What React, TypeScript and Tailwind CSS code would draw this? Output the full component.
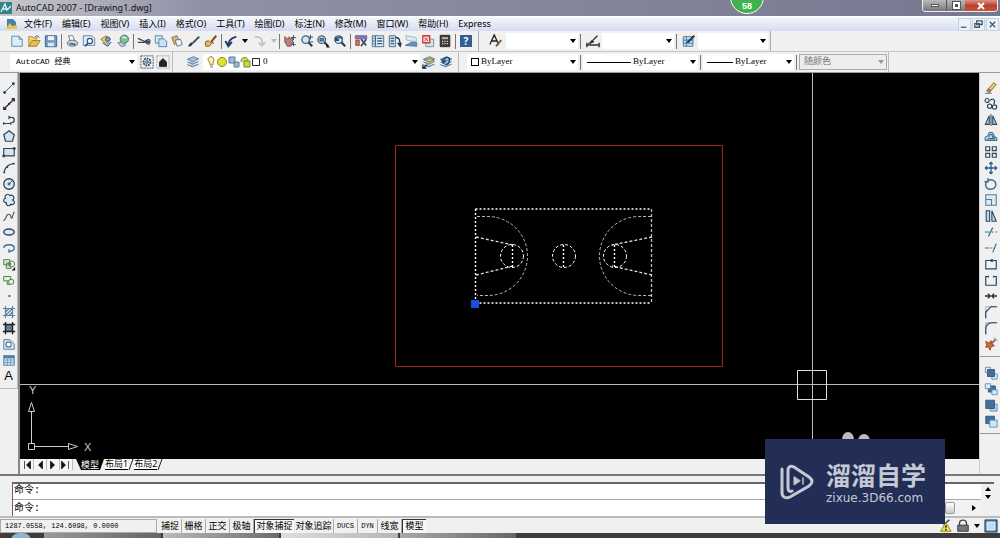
import type { ReactNode } from "react";

type Tool = { name: string; art: ReactNode };

const LENS = <><circle cx="6.5" cy="6.5" r="4.3" fill="#d5e6f2" stroke="#3b6184" strokeWidth="1.5" /><path d="M9.5 9.5l4.5 4.5" stroke="#263f57" strokeWidth="2.4" /></>;
const SHEETS = <path d="M1.5 5l7-3 6 2.5-7 3zM1.5 8l6 2.5 7-3M1.5 11l6 2.5 7-3" fill="#a8c6e2" stroke="#4a7196" />;

const fileTools: Tool[] = [
  { name: "新建", art: <path d="M2 2.5h8.500l3.500 3.500v8H2zM10.500 2.500v3.500H14" fill="#d9eefa" stroke="#4f86a8" /> },
  { name: "打开", art: <><path d="M2 14V3h4l1 1.500h5L8 9z" fill="#f2d774" stroke="#a8892c" /><path d="M2 14l4-6.500h9L11 14z" fill="#e9c14b" stroke="#94772a" /><path d="M9 3.500c2-2 4-1.500 5 .5" stroke="#2d4b6b" /></> },
  { name: "保存", art: <><path d="M1.500 2h13v12.500h-13z" fill="#739dc6" stroke="#355f8b" /><path d="M4.500 2.500h7V7h-7z" fill="#eef5fa" stroke="none" /><path d="M4.500 10h7v4h-7z" fill="#dbe7f2" stroke="none" /></> },
];

const plotTools: Tool[] = [
  { name: "打印", art: <><path d="M4 2h5l2 6H6z" fill="#fff" stroke="#66727d" /><ellipse cx="8.500" cy="10.500" rx="6" ry="3.500" fill="#c6cfd8" stroke="#5d6b78" /><path d="M5 11l7 1" stroke="#3a5066" strokeWidth="1.500" /></> },
  { name: "打印预览", art: <><path d="M1.500 2h10l3 3v8h-13z" fill="#dcecf8" stroke="#557fa5" /><circle cx="9" cy="8" r="3" fill="#fff" stroke="#2e5274" strokeWidth="1.300" /><path d="M7 10.500L3.500 14" stroke="#2e5274" strokeWidth="2" /></> },
  { name: "发布", art: <><path d="M2 6l6-4 5 4-5 5z" fill="#f2d15a" stroke="#8e7426" /><path d="M4 10l6 4 4-5" fill="#9bb7cf" /><circle cx="10" cy="6" r="2.500" fill="#7da4c8" /></> },
  { name: "三维 DWF", art: <><circle cx="9.500" cy="6" r="4.800" fill="#82bd97" stroke="#3b785a" /><path d="M7 4c2-1 3 1 5 0" stroke="#e4f5e9" strokeWidth="1.500" /><path d="M2 10l5-1 4 4-5 1.500z" fill="#b7c8d6" stroke="#64798c" /></> },
];

const editTools: Tool[] = [
  { name: "剪切", art: <path d="M1 5l8 3.500M1 9.500h9M10 8.500c1.500-3 5-2.500 5-.500s-3.500 2-5 .500c1 4 5 3.500 4.500 1.500s-3-2-4.500-1.500" stroke="#3a444e" strokeWidth="1.300" /> },
  { name: "复制", art: <><path d="M1.500 2h8v8.500h-8z" fill="#d8ebf8" stroke="#4e7ba1" /><path d="M5.500 5.500h6l3 3v6h-9z" fill="#c9e2f3" stroke="#4e7ba1" /></> },
  { name: "粘贴", art: <><path d="M2 4l6-2 3 7-6 3z" fill="#d4bb7e" stroke="#79683e" /><path d="M6 7l6-1 2 6-6 2z" fill="#eef4f8" stroke="#5c6e7f" /></> },
  { name: "特性匹配", art: <><path d="M2 14c1-4 3-4 5-4L5 13z" fill="#283848" stroke="#283848" /><path d="M7 10l7-7" stroke="#40566b" strokeWidth="2.400" /></> },
  { name: "块编辑器", art: <><path d="M1.500 9L5 7.500 8.500 11 6 14H2z" fill="#e2c14d" stroke="#705a20" /><path d="M8 9l6-7" stroke="#814f2a" strokeWidth="2.400" /><path d="M8 8l3 3" stroke="#b63a27" strokeWidth="1.500" /></> },
];

const viewTools: Tool[] = [
  { name: "实时平移", art: <><path d="M2 3l4 3 1-3 2 3 2-2v6l-2 4H5L2 9z" fill="#b98078" stroke="#795552" /><path d="M12 1v6M9 4h6M12 9v5M9.500 12h5" stroke="#294d70" /></> },
  { name: "实时缩放", art: <>{LENS}<path d="M12 1v5M10 3.500h5M11 9h4" stroke="#2c4058" /></> },
  { name: "窗口缩放", art: <>{LENS}<path d="M4.500 5h4v3h-4z" fill="#6c9bc1" /><path d="M12 15.500h4l-4-4z" fill="#111" stroke="none" /></> },
  { name: "缩放上一个", art: <>{LENS}<path d="M4 7c0-3 4-4 7-2M3 3v4h4" stroke="#1d4d78" strokeWidth="1.800" /></> },
];

const paletteTools: Tool[] = [
  { name: "特性", art: <><path d="M1.500 2h13v3.500h-13z" fill="#8a76c4" stroke="#6b5a9e" /><path d="M2 7h4v6H2z" fill="#e26f58" stroke="#91483c" /><path d="M8 6l6 7M14 6l-6 8" stroke="#31485d" strokeWidth="1.800" /></> },
  { name: "设计中心", art: <><path d="M1.500 2h13v12.500h-13z" fill="#e2eef7" stroke="#3f658a" /><path d="M5 2v12M7 5h6M7 8h6M7 11h6M2.500 5h1M2.500 8h1M2.500 11h1" stroke="#3f658a" strokeWidth="1.500" /></> },
  { name: "工具选项板", art: <><path d="M1.500 2h7v12.500h-7z" fill="#cddfee" stroke="#3f658a" /><path d="M3 5h4M3 8h4M3 11h4" stroke="#3f658a" strokeWidth="1.500" /><path d="M9 4c4 0 5 3 4.500 9M11 10l3 4 1-4" stroke="#1e3448" strokeWidth="1.500" /></> },
  { name: "图纸集", art: <><path d="M2 2l12 2v5L3 7z" fill="#dceaf2" stroke="#9db1c1" /><path d="M1.500 13l8-4 5 1v4z" fill="#6594b8" stroke="#487093" /></> },
  { name: "标记集", art: <><path d="M5.500 6h9v8.500h-9z" fill="#d5dee6" stroke="#7b8b9a" /><path d="M2 2h8v8H2z" fill="#f6d7d6" stroke="#cc3a38" strokeWidth="1.500" /><path d="M4 4l4 4M8 4L4 8" stroke="#c43735" /></> },
  { name: "快速计算器", art: <><path d="M2.500 1.500h11v13h-11z" fill="#3d3536" stroke="#2d2829" /><path d="M4.500 3.500h7v2.500h-7z" fill="#a9bd94" stroke="none" /><path d="M4.500 8.500h7M4.500 11h7" stroke="#e3d6d1" strokeWidth="1.500" strokeDasharray="1.500 1.200" /></> },
];

const drawTools: Tool[] = [
  { name: "直线", art: <><path d="M3 13L13 3" /><path d="M2 12h2v2H2zM12 2h2v2h-2z" fill="#2b4560" /></> },
  { name: "构造线", art: <path d="M2 14L14 2M2 11v3h3M11 2h3v3M7 7l2 2" strokeWidth="1.500" stroke="#222f3c" /> },
  { name: "多段线", art: <path d="M1 12h9M10 10.500v3M2 10.500v3M8 5h3c4 0 4 6 0 6M8 3v4" strokeWidth="1.400" /> },
  { name: "正多边形", art: <path d="M8 2l6 4.500L12 14H4L2 6.500z" fill="#d5e5f0" strokeWidth="1.400" /> },
  { name: "矩形", art: <><path d="M2 4h12v8.500H2z" fill="#d5e5f0" strokeWidth="1.300" /><path d="M1 11.500h2v2H1zM13 3h2v2h-2z" fill="#1b2d3d" /></> },
  { name: "圆弧", art: <><path d="M2.500 13C3 8 7 3.500 13 3" strokeWidth="1.400" /><path d="M1.500 12h2v2h-2zM12.500 2h2v2h-2zM5 6h2v2H5z" fill="#2b4560" stroke="none" /></> },
  { name: "圆", art: <><circle cx="8" cy="8" r="6" fill="#dceaf3" strokeWidth="1.500" /><path d="M8 8l3.500-3.500M7 7h2v2H7z" /></> },
  { name: "修订云线", art: <path d="M4 6c-2-4 3-6 5-3 4-2 6 3 3 5 4 2 2 6-2 5-2 3-6 1-5-2-4 0-4-4-1-5z" fill="#dceaf3" strokeWidth="1.300" /> },
  { name: "样条曲线", art: <path d="M1.500 13c4 0 2-7 6-7s2 6 4 4l2.500-7" strokeWidth="1.300" stroke="#4a5662" /> },
  { name: "椭圆", art: <ellipse cx="8" cy="8" rx="6" ry="3.500" fill="#dceaf3" strokeWidth="1.600" /> },
  { name: "椭圆弧", art: <path d="M2 8c0-5 12-5 12 0 0 3-3 4-6 3.500M8 9.500v4" strokeWidth="1.500" stroke="#406c93" /> },
  { name: "插入块", art: <><path d="M2 3h7v6H2zM5 7h5v6H5z" fill="#d7ecd0" stroke="#3f7a3d" /><circle cx="11" cy="8" r="3.500" stroke="#54764f" /><path d="M11 15.500h4v-4z" fill="#111" stroke="none" /></> },
  { name: "创建块", art: <><path d="M2 4h8v5H2z" fill="#e5f0df" stroke="#39733c" /><circle cx="10.500" cy="10" r="3" fill="#e5f0df" stroke="#39733c" /><path d="M6 9v4h3" stroke="#39733c" /></> },
  { name: "点", art: <path d="M7.500 7h2v2h-2z" fill="#2b4560" stroke="none" /> },
  { name: "图案填充", art: <path d="M4 1v14M12 1v14M1 4h14M1 12h14M4 8l4-4M4 12l8-8M8 12l4-4" stroke="#567fa4" strokeWidth="1.300" /> },
  { name: "渐变色", art: <><path d="M4 4h8v8H4z" fill="#6b7c8b" /><path d="M4 1v14M12 1v14M1 4h14M1 12h14" stroke="#17222d" strokeWidth="1.600" /></> },
  { name: "面域", art: <><path d="M2 3h7l5 5v6H2z" fill="#d7e8f5" stroke="#4a78a0" /><circle cx="7.500" cy="8.500" r="3" fill="#fff" stroke="#4a78a0" strokeWidth="1.300" /></> },
  { name: "表格", art: <><path d="M2 3h12v11H2z" fill="#d4e6f5" stroke="#4c79a4" /><path d="M2 4.500h12" stroke="#4c79a4" strokeWidth="3" /><path d="M6 3v11M10 3v11M2 8h12M2 11h12" stroke="#6e96bb" /></> },
];

const modifyTools: Tool[] = [
  { name: "删除", art: <><path d="M5 9l6-7 3 2-6 7z" fill="#eac95d" stroke="#806b39" /><path d="M3 11l2-2 3 2-2 2.500z" fill="#d58475" stroke="#725047" /><path d="M1 14h8" stroke="#666" /></> },
  { name: "复制对象", art: <><circle cx="3.500" cy="4" r="2.300" strokeWidth="1.300" /><path d="M7 4c3-4 7 0 4 4" strokeWidth="1.300" /><circle cx="6.500" cy="10.500" r="2.500" strokeWidth="1.300" /><circle cx="12" cy="11.500" r="2.500" strokeWidth="1.300" /></> },
  { name: "镜像", art: <path d="M6 3v10H1.500zM10 3v10h4.500zM8 1.500v13" fill="#a7c8de" strokeWidth="1.200" /> },
  { name: "偏移", art: <path d="M1.500 13h13c1-3-1-4-3-4 0-7-7-7-7-1-3 0-4 3-3 5zM4 11h8c0-1-2-1-2-1 0-5-4-5-4-1" fill="#bed9e8" stroke="#416d8f" strokeWidth="1.200" /> },
  { name: "阵列", art: <path d="M2 2h4.500v4.500H2zM9.500 2H14v4.500H9.500zM2 9.500h4.500V14H2zM9.500 9.500H14V14H9.500z" strokeWidth="1.300" /> },
  { name: "移动", art: <path d="M8 1.500v13M1.500 8h13M6 3.500l2-2 2 2M6 12.500l2 2 2-2M3.500 6l-2 2 2 2M12.500 6l2 2-2 2" stroke="#315e87" strokeWidth="1.500" /> },
  { name: "旋转", art: <path d="M4.500 4.500C8 1.500 14 4 13.500 9c-1 6-10 7-11.500 1-.5-2 0-4 2.500-5.500M4.500 1.500v4h-4" stroke="#416d92" strokeWidth="1.600" /> },
  { name: "缩放", art: <path d="M2 2h12v12H2zM2 7.500h6.500V14H2z" fill="#dceaf4" stroke="#517c9d" strokeWidth="1.200" /> },
  { name: "拉伸", art: <path d="M2.500 2v12h4V2zM9 2l5 12H9z" fill="#bdd7e7" strokeWidth="1.200" /> },
  { name: "修剪", art: <path d="M1 8h5M9 8h2M13 8h2M5 13l5-10" stroke="#3c7188" strokeWidth="1.400" /> },
  { name: "延伸", art: <path d="M1 8h5M7.500 8h2M11 8h1M10 13l4-10" stroke="#3c7188" strokeWidth="1.400" /> },
  { name: "打断于点", art: <><path d="M2 4h12v9.500H2z" strokeWidth="1.300" /><path d="M8 3h2v2H8z" fill="#2b4560" /></> },
  { name: "打断", art: <path d="M5 4H2v10h12V4h-3M5 3v2M11 3v2" strokeWidth="1.400" /> },
  { name: "合并", art: <path d="M1 8h6M9 8h6M4.500 5.500L7 8l-2.500 2.500M11.500 5.500L9 8l2.500 2.500" strokeWidth="1.700" stroke="#24394d" /> },
  { name: "倒角", art: <><path d="M2 15V2h12" stroke="#93a5b3" /><path d="M2 15V8l6-6h7" strokeWidth="1.300" /></> },
  { name: "圆角", art: <><path d="M2 15V2h12" stroke="#93a5b3" /><path d="M2 15V9c0-4 3-7 7-7h6" strokeWidth="1.300" /></> },
  { name: "分解", art: <><path d="M2 5l4 2 2-3 1 4 3 2-4 1-1 4-2-4-3 1 1-3z" fill="#d96a32" stroke="#8e3f25" /><path d="M8 8l5-5" stroke="#7d5b42" strokeWidth="2" /><path d="M11 1l3 1 1 3" stroke="#8aa5b5" /></> },
];

const orderTools: Tool[] = [
  { name: "前置", art: <><path d="M1.500 1.500h6v6h-6zM9 9h6v6H9z" fill="#dceaf5" stroke="#5d8bb4" /><path d="M4 4h8v8H4z" fill="#456f98" stroke="#31597f" /></> },
  { name: "后置", art: <><path d="M5 4.500h8v7H5z" fill="#456f98" stroke="#31597f" /><path d="M1.500 2h6v5.500h-6zM9 9h6v5.500H9z" fill="#dceaf5" stroke="#5d8bb4" /></> },
  { name: "置于对象之上", art: <><path d="M7 7h8v8H7z" fill="#b8d4e9" stroke="#5d8bb4" /><path d="M2 2.500h10V12H2z" fill="#456f98" stroke="#31597f" /></> },
  { name: "置于对象之下", art: <><path d="M2 2.500h10V11H2z" fill="#456f98" stroke="#31597f" /><path d="M6.500 7H15v8H6.500z" fill="#cce5f5" stroke="#5d8bb4" /></> },
];

const menus = ["文件(F)", "编辑(E)", "视图(V)", "插入(I)", "格式(O)", "工具(T)", "绘图(D)", "标注(N)", "修改(M)", "窗口(W)", "帮助(H)", "Express"];

const modes = [
  { label: "捕捉", width: "w-[23px]" },
  { label: "栅格", width: "w-6" },
  { label: "正交", width: "w-6" },
  { label: "极轴", width: "w-6" },
  { label: "对象捕捉", width: "w-10", on: true },
  { label: "对象追踪", width: "w-10" },
  { label: "DUCS", width: "w-6" },
  { label: "DYN", width: "w-5" },
  { label: "线宽", width: "w-6" },
  { label: "模型", width: "w-6", on: true },
];

function Art({ children }: { children: ReactNode }) {
  return (
    <svg viewBox="0 0 16 16" className="size-3.5 shrink-0" fill="none" stroke="#2b4560" aria-hidden="true">
      {children}
    </svg>
  );
}

function ToolButton({ tool }: { tool: Tool }) {
  return (
    <button type="button" aria-label={tool.name} className="flex h-4 min-w-0 flex-1 items-center justify-center">
      <Art>{tool.art}</Art>
    </button>
  );
}

function ToolGroup({ tools, className }: { tools: Tool[]; className: string }) {
  return (
    <div className={`flex shrink-0 items-center ${className}`}>
      {tools.map((tool) => (
        <ToolButton key={tool.name} tool={tool} />
      ))}
    </div>
  );
}

function ToolColumn({ tools }: { tools: Tool[] }) {
  return (
    <div className="flex flex-col">
      {tools.map((tool) => (
        <button key={tool.name} type="button" aria-label={tool.name} className="flex h-4 items-center justify-center">
          <Art>{tool.art}</Art>
        </button>
      ))}
    </div>
  );
}

function Divider() {
  return <div className="mx-[2px] h-[15px] w-px shrink-0 bg-[#777]" />;
}

function Arrow({ className = "text-black" }: { className?: string }) {
  return (
    <svg viewBox="0 0 6 4" className={`h-1 w-1.5 shrink-0 ${className}`} aria-hidden="true">
      <path d="M0 0h6L3 4z" fill="currentColor" />
    </svg>
  );
}

function Combo({ label, value, width, lead, muted }: { label: string; value: string; width: string; lead?: ReactNode; muted?: boolean }) {
  return (
    <label className={`flex h-4 shrink-0 items-center gap-[2px] pl-1 pr-[2px] ${width} ${muted ? "border border-[#aaa] bg-[#ededed]" : "bg-white"}`}>
      {lead}
      <select
        aria-label={label}
        disabled={muted}
        className={`min-w-0 flex-1 appearance-none bg-transparent ${muted ? "text-[#777]" : "text-black"}`}
      >
        <option>{value}</option>
      </select>
      <Arrow className={muted ? "text-[#999]" : "text-black"} />
    </label>
  );
}

function TitleBar() {
  return (
    <header className="relative flex h-4 shrink-0 items-center bg-linear-to-r from-[#c9c9cf] via-[#9090a6] via-20% to-[#77778f]">
      <svg viewBox="0 0 12 12" className="h-3 w-3 shrink-0" aria-hidden="true">
        <path d="M0 0h12v12H0z" fill="#37828a" />
        <path d="M1 10l4-8 2 6 4-4M3 7h5" stroke="#dff3f2" strokeWidth="1.300" fill="none" />
      </svg>
      <h1 className="ml-1 text-[9px] leading-4 text-[#111]">AutoCAD 2007 - [Drawing1.dwg]</h1>
      <div className="absolute -top-5 left-[73%] flex size-[34px] items-end justify-center rounded-full border border-white bg-[#3fb14d] pb-[2px] font-['Liberation_Sans',sans-serif] text-[9px] font-bold leading-[10px] text-white">
        58
      </div>
      <div className="ml-auto mr-[2px] flex h-3 self-start overflow-hidden rounded-b border border-t-0 border-[#eee]">
        <button type="button" aria-label="最小化" className="flex w-6 items-center justify-center border-r border-[#555] bg-linear-to-b from-[#bababd] to-[#77777e]">
          <span className="h-[3px] w-2 border border-[#555] bg-white" />
        </button>
        <button type="button" aria-label="还原" className="flex w-[18px] items-center justify-center bg-linear-to-b from-[#bababd] to-[#77777e]">
          <span className="size-[7px] border-2 border-white bg-[#555] outline-1 outline-[#555]" />
        </button>
        <button type="button" aria-label="关闭" className="flex w-8 items-center justify-center bg-linear-to-b from-[#dc9482] via-[#b93f2c] to-[#c8543c]">
          <svg viewBox="0 0 8 8" className="size-2" aria-hidden="true">
            <path d="M1 1l6 6M7 1L1 7" stroke="#fff" strokeWidth="2" />
          </svg>
        </button>
      </div>
    </header>
  );
}

function MenuBar() {
  return (
    <nav className="flex h-[15px] shrink-0 items-center border-t border-white bg-linear-to-b from-[#f4f7fc] to-[#d5dcef] text-[9px] leading-[14px]">
      <svg viewBox="0 0 12 12" className="ml-1.5 mr-1.5 size-3" aria-hidden="true">
        <path d="M1 1h6l3 3v5H1z" fill="#4c7eb1" />
        <path d="M0 10l4-5 2 3 5-1v4H0z" fill="#ecc53f" />
      </svg>
      <div className="flex gap-2.5">
        {menus.map((menu) => (
          <button key={menu} type="button" className="whitespace-nowrap">
            {menu}
          </button>
        ))}
      </div>
      <div className="ml-auto mr-px flex gap-px">
        {["M2 9h6", "M4 2h6v4H4zM2 5h5v4H2z", "M3 3l6 6M9 3L3 9"].map((d, i) => (
          <button key={d} type="button" aria-label={["最小化图形", "还原图形", "关闭图形"][i]} className="size-[13px] border border-[#c2d2e2] bg-[#eaf3fb]">
            <svg viewBox="0 0 12 12" className="size-full" aria-hidden="true">
              <path d={d} fill="none" stroke="#44576b" strokeWidth="1.400" />
            </svg>
          </button>
        ))}
      </div>
    </nav>
  );
}

function StandardToolbar() {
  return (
    <div className="flex h-[21px] shrink-0 items-center border-b border-[#c5c5c5]">
      <div className="flex h-full items-center border-r border-[#aaa] pl-2">
        <ToolGroup tools={fileTools} className="w-[51px]" />
        <Divider />
        <ToolGroup tools={plotTools} className="w-[67px]" />
        <Divider />
        <ToolGroup tools={editTools} className="w-[83px]" />
        <Divider />
        <div className="flex w-[53px] items-center justify-between">
          <button type="button" aria-label="放弃">
            <Art><path d="M5 15C4 9 7 5 14 3M1.500 8l3.500 6 4-5" stroke="#213f60" strokeWidth="2.200" /></Art>
          </button>
          <Arrow />
          <button type="button" aria-label="重做" disabled>
            <Art><path d="M2 3c7 0 10 4 8 10M6.500 9.500l3.500 4 4-4" stroke="#c3c3c3" strokeWidth="2" /></Art>
          </button>
          <Arrow className="text-[#bbb]" />
        </div>
        <Divider />
        <ToolGroup tools={viewTools} className="w-[66px]" />
        <Divider />
        <ToolGroup tools={paletteTools} className="w-[100px]" />
        <Divider />
        <button type="button" aria-label="帮助" className="flex size-4 items-center justify-center">
          <span className="size-3 bg-[#2f6090] text-center text-[10px] font-bold leading-3 text-white">?</span>
        </button>
        <div className="w-1" />
      </div>
      <div className="flex h-full items-center border-r border-[#aaa] pl-2.5 pr-[2px] text-[8px]">
        <Art><path d="M1 12L6 1l5 11M3 8h6" stroke="#222" strokeWidth="1.500" /><path d="M8 14l6-7" stroke="#7b6044" strokeWidth="2.200" /></Art>
        <div className="w-[3px]" />
        <Combo label="文字样式" value="" width="w-[72px]" />
        <Divider />
        <div className="flex w-[19px] justify-center">
          <Art><path d="M1 10v5M15 10v5M1 12.500h14M6 9l7-7" stroke="#333" strokeWidth="1.600" /><path d="M2 12l5-5 2 2z" fill="#222" /></Art>
        </div>
        <Combo label="标注样式" value="" width="w-[72px]" />
        <Divider />
        <div className="flex w-[19px] justify-center">
          <Art><path d="M1.500 3h11v11h-11zM1.500 7h11M1.500 10.500h11M5 3v11" fill="#cddff0" stroke="#3f6b94" /><path d="M6 10l8-8" stroke="#263b50" strokeWidth="2.500" /></Art>
        </div>
        <Combo label="表格样式" value="" width="w-[70px]" />
      </div>
    </div>
  );
}

function PropertiesToolbar() {
  return (
    <div className="flex h-[21px] shrink-0 items-center border-b border-[#999] font-['Liberation_Serif','Noto_Sans_CJK_SC',serif] text-[9px]">
      <div className="flex h-full items-center border-r border-[#bbb] pl-[10px] font-['Liberation_Mono','Noto_Sans_CJK_SC',monospace] text-[8px]">
        <Combo label="工作空间" value="AutoCAD 经典" width="w-[127px]" lead={<span />} />
        <ToolGroup
          className="w-[34px] pl-[2px]"
          tools={[
            { name: "工作空间设置", art: <><path d="M1 1h14v14H1z" strokeDasharray="2 1" /><circle cx="8" cy="8" r="4" fill="#d3e3ef" strokeWidth="2" strokeDasharray="2 1" /><circle cx="8" cy="8" r="1.500" /></> },
            { name: "我的工作空间", art: <><path d="M1 1h14v14H1z" strokeDasharray="2 1" stroke="#999" /><path d="M4 8l4-4 4 4v5H4z" fill="#222" stroke="#222" /></> },
          ]}
        />
        <div className="w-px" />
      </div>
      <div className="flex h-full items-center border-r border-[#bbb] pl-[13px] pr-1">
        <div className="flex w-[17px]"><Art>{SHEETS}</Art></div>
        <Combo
          label="图层"
          value="0"
          width="w-[217px]"
          lead={
            <svg viewBox="0 0 54 14" className="h-3.5 w-[54px] shrink-0" fill="none" aria-hidden="true">
              <path d="M1 5a3 3 0 1 1 5 2v3H3V8zM3 12h3" fill="#fff3a4" stroke="#8a8050" />
              <circle cx="15" cy="7" r="4.500" fill="#dfe52e" stroke="#858a20" />
              <path d="M22 2h6v6h-6zM27 7h5v5h-5z" fill="#9bbad3" stroke="#607d96" />
              <path d="M34 7c0-6 7-6 7-1M37 6h6v6h-6z" fill="#d2d64b" stroke="#76833a" />
              <path d="M45.500 3.500h7v7h-7z" fill="#fff" stroke="#222" />
            </svg>
          }
        />
        <ToolGroup
          className="w-[34px]"
          tools={[
            { name: "将对象的图层置为当前", art: <><g>{SHEETS}</g><path d="M3 6l6-2 5 2-6 2z" fill="#dfcf56" stroke="#83813c" /><path d="M1 15l5-4M1 11v4h4" stroke="#111" strokeWidth="1.300" /></> },
            { name: "上一个图层", art: <>{SHEETS}<path d="M5 7c0-5 7-6 7-1s-3 5-5 5M3 5l2 4 3-3" stroke="#214c77" strokeWidth="1.700" /></> },
          ]}
        />
      </div>
      <div className="flex h-full items-center border-r border-[#bbb] pl-2 pr-px">
        <Combo label="颜色" value="ByLayer" width="w-[111px]" lead={<span className="size-2 border border-black bg-white" />} />
        <Divider />
        <Combo label="线型" value="ByLayer" width="w-[115px]" lead={<span className="h-px w-11 bg-black" />} />
        <Divider />
        <Combo label="线宽" value="ByLayer" width="w-[91px]" lead={<span className="h-px w-[26px] bg-black" />} />
        <Divider />
        <Combo label="打印样式" value="随颜色" width="w-[88px]" muted />
      </div>
    </div>
  );
}

function Court() {
  return (
    <g fill="none" stroke="#fff" strokeDasharray="3 2">
      <path d="M455.500 136h176M455.500 230h176M455.500 136v94" strokeWidth="1.400" strokeDasharray="2 2" />
      <path d="M631.500 136v94" strokeWidth="1.300" stroke="#bbb" />
      <path d="M457 143.500h11a39.500 39.500 0 0 1 0 79h-11M631 143.500h-12a39.500 39.500 0 0 0 0 79h12" stroke="#bbb" />
      <path d="M456 164l37 8M456 202l37-9M632 164l-40 8M632 202l-40-9" stroke="#ddd" strokeWidth="1.300" />
      <path d="M492.500 172v23M543.500 172v23M594.500 172v23" strokeDasharray="2 2" strokeWidth="1.400" />
      <circle cx="492" cy="183" r="11.500" />
      <circle cx="544" cy="183" r="11.500" />
      <circle cx="595" cy="183" r="11.500" />
    </g>
  );
}

function DrawingArea() {
  return (
    <div className="relative min-h-0 flex-1 overflow-hidden bg-black">
      <svg className="absolute inset-0 h-full w-full" aria-label="模型空间">
        <path d="M375.500 72.500h327v221h-327z" fill="none" stroke="#a32222" />
        <Court />
        <path d="M451 227h8v8h-8z" fill="#1c4fdc" />
        <line x1="0" y1="311.500" x2="100%" y2="311.500" stroke="#bbb" />
        <line x1="792.500" y1="0" x2="792.500" y2="100%" stroke="#bbb" />
        <path d="M777.500 297.500h29v29h-29z" fill="none" stroke="#ddd" />
        <ellipse cx="828" cy="367" rx="6" ry="8" fill="#bbb" />
        <ellipse cx="844" cy="368" rx="6" ry="7" fill="#bbb" />
      </svg>
      <svg viewBox="0 0 80 80" className="absolute bottom-0 left-0 size-20 font-['Liberation_Sans',sans-serif]" fill="none" stroke="#ccc" aria-hidden="true">
        <path d="M8.500 64.500h6v6h-6zM11.500 64V32M15 67.500h34M8.500 32.500l3-9 3 9zM48.500 64.500l9 3-9 3z" />
        <text x="9" y="15" fontSize="11" fill="#ccc" stroke="none">Y</text>
        <text x="64" y="72" fontSize="11" fill="#ccc" stroke="none">X</text>
      </svg>
    </div>
  );
}

function Slash({ d }: { d: string }) {
  return (
    <svg viewBox="0 0 6 11" className="h-[11px] w-1.5 shrink-0" aria-hidden="true">
      <path d={d} stroke="#222" fill="none" />
    </svg>
  );
}

function LayoutTabs() {
  return (
    <div className="flex h-[15px] shrink-0 items-start pl-px text-[9px] leading-[10px]">
      {["M3 1v8M9 1L5 5l4 4z", "M8 1L4 5l4 4z", "M3 1l4 4-4 4z", "M1 1l4 4-4 4zM8 1v8"].map((d, i) => (
        <button key={d} type="button" aria-label={["第一个", "上一个", "下一个", "最后一个"][i]} className="h-[11px] w-[13px] border-r border-[#bbb] bg-[#f6f6f6]">
          <svg viewBox="0 0 11 10" className="h-2.5 w-3" aria-hidden="true">
            <path d={d} stroke="#111" fill="#111" strokeWidth="0.700" />
          </svg>
        </button>
      ))}
      <svg viewBox="0 0 5 11" className="ml-[3px] h-[11px] w-[5px]" aria-hidden="true">
        <path d="M0 0h5v11z" fill="#000" />
      </svg>
      <button type="button" className="h-[11px] bg-black text-white">模型</button>
      <svg viewBox="0 0 6 11" className="h-[11px] w-1.5 shrink-0" aria-hidden="true">
        <path d="M0 0h5L1 11H0z" fill="#000" />
      </svg>
      <button type="button" className="h-[11px] border-b border-black bg-white">布局1</button>
      <Slash d="M5 0L1 11" />
      <button type="button" className="h-[11px] border-b border-black bg-white">布局2</button>
      <Slash d="M5 0L1 11" />
    </div>
  );
}

function CommandWindow() {
  return (
    <section className="shrink-0 border-t-2 border-[#777] pt-1.5 font-['Liberation_Mono','Noto_Sans_CJK_SC',monospace] text-[10px]">
      <div className="flex pl-3">
        <div className="min-w-0 flex-1 border-l border-t-2 border-[#666] bg-white">
          <p className="h-4 border-b border-[#aaa] pl-px leading-[14px]">命令:</p>
          <div className="flex h-4 items-center">
            <label htmlFor="command" className="pl-px">命令:</label>
            <input id="command" className="min-w-0 flex-1 bg-transparent outline-none" />
            <div className="flex h-full w-9 items-center justify-between bg-[#f2f2f2]">
              <span className="h-3 w-2.5 rounded-xs border border-[#999] bg-linear-to-b from-white to-[#ccc]" />
              <Arrow className="mr-1 -rotate-90" />
            </div>
          </div>
        </div>
        <div className="flex w-[13px] flex-col items-center gap-1 border-t-2 border-[#666] pt-[3px]">
          <Arrow className="rotate-180" />
          <Arrow />
        </div>
        <div className="w-1.5" />
      </div>
    </section>
  );
}

function StatusBar() {
  return (
    <footer className="flex h-[17px] shrink-0 items-center border-t-2 border-[#bbb] text-[9px]">
      <output className="h-3.5 w-[157px] border border-[#aaa] pl-1 font-['Liberation_Mono',monospace] text-[7px] leading-3">
        1287.0558, 124.6098, 0.0000
      </output>
      <div className="ml-[2px] flex">
        {modes.map((mode) => (
          <button
            key={mode.label}
            type="button"
            aria-pressed={!!mode.on}
            className={`h-3.5 whitespace-nowrap text-center leading-3 ${mode.width} ${mode.on ? "border-l border-t border-[#333] bg-[#f8f8f8]" : "border-r border-[#aaa]"} ${/^D/.test(mode.label) ? "font-['Liberation_Mono',monospace] text-[7px]" : ""}`}
          >
            {mode.label}
          </button>
        ))}
      </div>
      <div className="ml-auto flex items-center gap-1 pr-[2px]">
        <Art><path d="M1 2l6 4 6-5" strokeWidth="1.500" /><path d="M9 4l6 10H3z" fill="#f5e54a" stroke="#887b26" /><path d="M9 7v3M9 11v2" stroke="#111" strokeWidth="1.500" /></Art>
        <Art><path d="M4 7V5c0-5 8-5 8 0v2" strokeWidth="1.600" stroke="#444" /><path d="M2 7h12v7H2z" fill="#70767c" stroke="#333" /></Art>
        <Arrow />
        <Art><path d="M1 1h14v14H1z" fill="#4b7fae" /><path d="M3.500 3.500h9v9h-9z" fill="#b9dcf4" stroke="#fff" /></Art>
      </div>
    </footer>
  );
}

function Taskbar() {
  return (
    <div className="flex h-[5px] shrink-0 gap-[2px] overflow-hidden bg-[#3d3d3d]">
      <div className="flex w-[42px] justify-center"><span className="h-2 w-5 rounded-t-full bg-[#8fb4d0]" /></div>
      <div className="w-[117px] bg-linear-to-r from-[#999] to-[#666]" />
      <div className="w-[116px] bg-linear-to-r from-[#bbb] to-[#6c6c6c]" />
      <div className="w-[117px] bg-linear-to-r from-[#ddd] to-[#b5b5b5]" />
      <div className="w-[116px] bg-linear-to-r from-[#aaa] to-[#666]" />
    </div>
  );
}

function Watermark() {
  return (
    <aside className="absolute bottom-3.5 right-[55px] flex h-[85px] w-[180px] items-center gap-3 bg-[#222e55] pl-[15px] text-[#c5c9d4]">
      <svg viewBox="0 0 34 36" className="h-9 w-[34px] shrink-0" fill="none" stroke="currentColor" strokeLinecap="round" aria-hidden="true">
        <path d="M2 5v24c0 4 4 6 8 4l19-11c4-3 4-6 0-9L14 3c-4-2-6 0-6 4v17c0 3 2 4 4 3" strokeWidth="3" />
        <path d="M14 13v8l6-4z" fill="currentColor" strokeWidth="1" />
        <path d="M23 14v6" strokeWidth="1.500" />
      </svg>
      <div>
        <p className="font-['Noto_Sans_CJK_SC',sans-serif] text-[25px] font-bold leading-7">溜溜自学</p>
        <p className="mt-1 font-['DejaVu_Sans',sans-serif] text-[12px] leading-3">zixue.3D66.com</p>
      </div>
    </aside>
  );
}

export default function App() {
  return (
    <div className="relative flex h-screen flex-col overflow-hidden bg-[#f0f0f0] font-['Noto_Sans','Noto_Sans_CJK_SC',sans-serif] text-black">
      <TitleBar />
      <MenuBar />
      <StandardToolbar />
      <PropertiesToolbar />
      <main className="flex min-h-0 flex-1">
        <div className="w-5 shrink-0 border-r-2 border-[#888]">
          <div className="border-b border-r border-[#bbb] pb-1 pt-[7px]">
            <ToolColumn tools={drawTools} />
            <button type="button" aria-label="多行文字" className="flex h-4 w-full items-center justify-center font-['Liberation_Sans',sans-serif] text-[13px]">
              A
            </button>
          </div>
        </div>
        <div className="flex min-w-0 flex-1 flex-col">
          <DrawingArea />
          <LayoutTabs />
        </div>
        <div className="w-[21px] shrink-0 border-l border-[#ccc]">
          <div className="border-b border-[#999] pb-1 pl-px pt-[7px]">
            <ToolColumn tools={modifyTools} />
          </div>
          <div className="border-b border-[#999] pb-1 pl-px pt-2">
            <ToolColumn tools={orderTools} />
          </div>
        </div>
      </main>
      <CommandWindow />
      <StatusBar />
      <Taskbar />
      <Watermark />
    </div>
  );
}
